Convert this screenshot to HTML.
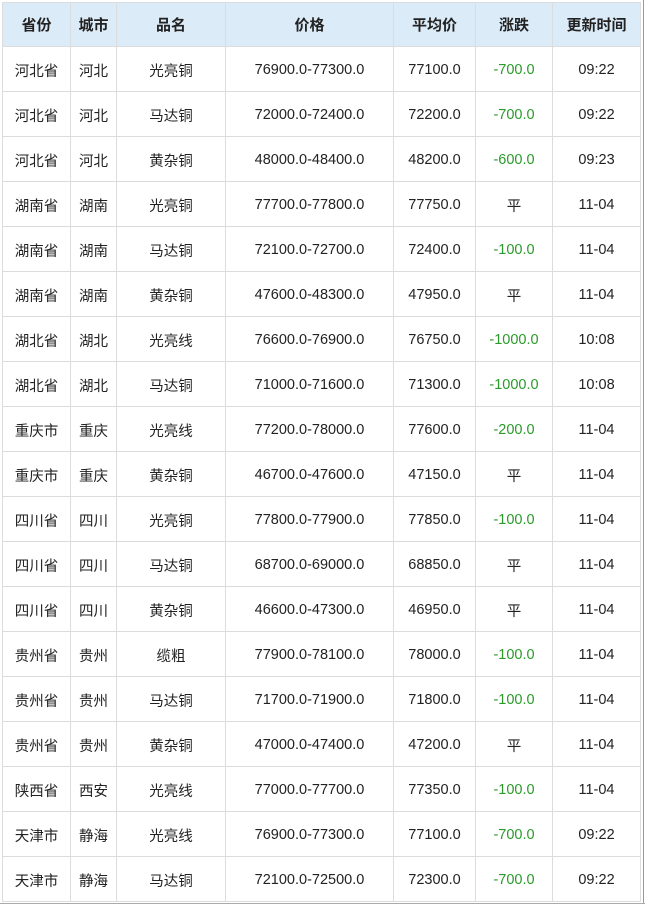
<!DOCTYPE html><html><head><meta charset="utf-8"><style>
body{margin:0;background:#fff;width:645px;height:905px;overflow:hidden;position:relative}
table{position:absolute;left:2px;top:2px;border-collapse:collapse;font-family:"Liberation Sans","Noto Sans CJK SC",sans-serif;font-size:14.5px;color:#222;table-layout:fixed}
td,th{border:1px solid #dcdcdc;text-align:center;height:44px;padding:0}
td{padding-top:2px;height:42px}
th{background:#dcebf8;font-weight:bold;font-size:15px;height:43px}
.g{color:#2a9a2a}
.frame{position:absolute;right:1px;top:0;bottom:1px;width:1px;background:#999}
.fb{position:absolute;left:0;right:0;bottom:1px;height:1px;background:#aaa}
</style></head><body>
<table>
<colgroup><col style="width:68px"><col style="width:46px"><col style="width:109px"><col style="width:168px"><col style="width:82px"><col style="width:77px"><col style="width:88px"></colgroup>
<tr><th>省份</th><th>城市</th><th>品名</th><th>价格</th><th>平均价</th><th>涨跌</th><th>更新时间</th></tr>
<tr><td>河北省</td><td>河北</td><td>光亮铜</td><td>76900.0-77300.0</td><td>77100.0</td><td class="g">-700.0</td><td>09:22</td></tr>
<tr><td>河北省</td><td>河北</td><td>马达铜</td><td>72000.0-72400.0</td><td>72200.0</td><td class="g">-700.0</td><td>09:22</td></tr>
<tr><td>河北省</td><td>河北</td><td>黄杂铜</td><td>48000.0-48400.0</td><td>48200.0</td><td class="g">-600.0</td><td>09:23</td></tr>
<tr><td>湖南省</td><td>湖南</td><td>光亮铜</td><td>77700.0-77800.0</td><td>77750.0</td><td>平</td><td>11-04</td></tr>
<tr><td>湖南省</td><td>湖南</td><td>马达铜</td><td>72100.0-72700.0</td><td>72400.0</td><td class="g">-100.0</td><td>11-04</td></tr>
<tr><td>湖南省</td><td>湖南</td><td>黄杂铜</td><td>47600.0-48300.0</td><td>47950.0</td><td>平</td><td>11-04</td></tr>
<tr><td>湖北省</td><td>湖北</td><td>光亮线</td><td>76600.0-76900.0</td><td>76750.0</td><td class="g">-1000.0</td><td>10:08</td></tr>
<tr><td>湖北省</td><td>湖北</td><td>马达铜</td><td>71000.0-71600.0</td><td>71300.0</td><td class="g">-1000.0</td><td>10:08</td></tr>
<tr><td>重庆市</td><td>重庆</td><td>光亮线</td><td>77200.0-78000.0</td><td>77600.0</td><td class="g">-200.0</td><td>11-04</td></tr>
<tr><td>重庆市</td><td>重庆</td><td>黄杂铜</td><td>46700.0-47600.0</td><td>47150.0</td><td>平</td><td>11-04</td></tr>
<tr><td>四川省</td><td>四川</td><td>光亮铜</td><td>77800.0-77900.0</td><td>77850.0</td><td class="g">-100.0</td><td>11-04</td></tr>
<tr><td>四川省</td><td>四川</td><td>马达铜</td><td>68700.0-69000.0</td><td>68850.0</td><td>平</td><td>11-04</td></tr>
<tr><td>四川省</td><td>四川</td><td>黄杂铜</td><td>46600.0-47300.0</td><td>46950.0</td><td>平</td><td>11-04</td></tr>
<tr><td>贵州省</td><td>贵州</td><td>缆粗</td><td>77900.0-78100.0</td><td>78000.0</td><td class="g">-100.0</td><td>11-04</td></tr>
<tr><td>贵州省</td><td>贵州</td><td>马达铜</td><td>71700.0-71900.0</td><td>71800.0</td><td class="g">-100.0</td><td>11-04</td></tr>
<tr><td>贵州省</td><td>贵州</td><td>黄杂铜</td><td>47000.0-47400.0</td><td>47200.0</td><td>平</td><td>11-04</td></tr>
<tr><td>陕西省</td><td>西安</td><td>光亮线</td><td>77000.0-77700.0</td><td>77350.0</td><td class="g">-100.0</td><td>11-04</td></tr>
<tr><td>天津市</td><td>静海</td><td>光亮线</td><td>76900.0-77300.0</td><td>77100.0</td><td class="g">-700.0</td><td>09:22</td></tr>
<tr><td>天津市</td><td>静海</td><td>马达铜</td><td>72100.0-72500.0</td><td>72300.0</td><td class="g">-700.0</td><td>09:22</td></tr>
</table>
<div class="frame"></div><div class="fb"></div>
</body></html>
